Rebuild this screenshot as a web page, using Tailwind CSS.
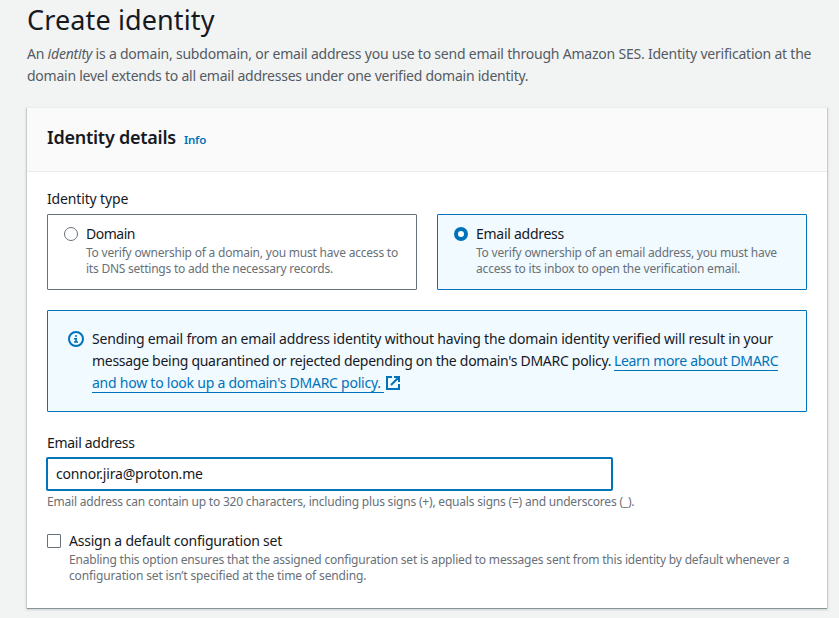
<!DOCTYPE html>
<html lang="en">
<head>
<meta charset="utf-8">
<title>Create identity</title>
<script src="https://cdn.jsdelivr.net/npm/@tailwindcss/browser@4"></script>
</head>
<body class="h-[618px] overflow-hidden bg-[#f2f3f3] font-['Noto_Sans',sans-serif] text-[14px] leading-[22px] text-[#16191f]">
<main class="ml-[27px] w-[800px] whitespace-nowrap pt-[2px]">
  <h1 class="h-[41px] text-[27px] leading-[36px] tracking-[0.12px]">Create identity</h1>
  <p class="text-[#545b64]">
    <span class="block tracking-[-0.214px]">An <em>identity</em> is a domain, subdomain, or email address you use to send email through Amazon SES. Identity verification at the</span>
    <span class="block tracking-[-0.24px]">domain level extends to all email addresses under one verified domain identity.</span>
  </p>

  <section class="mt-[21px] h-[500px] bg-white shadow-[0_1px_0_0_#879596,1px_0_0_0_#c8cdce,-1px_0_0_0_#c8cdce,0_-1px_0_0_#eaeded,0_1px_2px_1px_rgba(0,28,36,0.15)]">
    <header class="flex h-[64px] items-baseline gap-2 border-b border-[#eaeded] bg-[#fafafa] px-5 pt-[18px]">
      <h2 class="text-[18px] leading-[22px] font-semibold tracking-[-0.25px]">Identity details</h2>
      <a class="text-[11.5px] leading-[16px] font-semibold tracking-[-0.2px] text-[#0073bb]">Info</a>
    </header>

    <div class="px-5 pt-4">
      <div class="h-[26px] tracking-[-0.15px]">Identity type</div>
      <div class="grid grid-cols-2 gap-5">
        <label class="flex h-[76px] gap-2 rounded-[1px] border border-[#687078] pt-2 pl-4">
          <svg class="mt-1 size-[14px] shrink-0" viewBox="0 0 14 14"><circle cx="7" cy="7" r="6.5" fill="#fff" stroke="#687078"/></svg>
          <span>
            <span class="block tracking-[-0.48px]">Domain</span>
            <span class="block text-[12px] leading-4 text-[#687078]">
              <span class="block tracking-[-0.21px]">To verify ownership of a domain, you must have access to</span>
              <span class="block tracking-[-0.23px]">its DNS settings to add the necessary records.</span>
            </span>
          </span>
        </label>
        <label class="flex h-[76px] gap-2 rounded-[1px] border border-[#0073bb] bg-[#f1faff] pt-2 pl-4">
          <svg class="mt-1 size-[14px] shrink-0" viewBox="0 0 14 14"><circle cx="7" cy="7" r="5" fill="#fff" stroke="#0073bb" stroke-width="4"/></svg>
          <span>
            <span class="block tracking-[-0.27px]">Email address</span>
            <span class="block text-[12px] leading-4 text-[#687078]">
              <span class="block tracking-[-0.21px]">To verify ownership of an email address, you must have</span>
              <span class="block tracking-[-0.18px]">access to its inbox to open the verification email.</span>
            </span>
          </span>
        </label>
      </div>

      <div class="mt-5 flex h-[102px] gap-2 rounded-[1px] border border-[#0073bb] bg-[#f1faff] pt-[17px] pl-5">
        <svg class="mt-[3px] size-4 shrink-0" viewBox="0 0 16 16" fill="none" stroke="#0073bb" stroke-width="2"><circle cx="8" cy="8" r="7"/><path d="M7 5h2M6 7.75h3M8 7v4M6 11h4" stroke-width="1.6"/></svg>
        <p>
          <span class="block tracking-[-0.19px]">Sending email from an email address identity without having the domain identity verified will result in your</span>
          <span class="flex gap-1"><span class="w-[518px] tracking-[-0.285px]">message being quarantined or rejected depending on the domain's DMARC policy.</span><a class="h-[21px] w-[164px] border-b border-[#0073bb] tracking-[-0.33px] text-[#0073bb]">Learn more about DMARC</a></span>
          <span class="flex items-start"><a class="h-[21px] w-[292px] border-b border-[#0073bb] tracking-[-0.24px] text-[#0073bb]">and how to look up a domain's DMARC policy.</a><svg class="mt-1 ml-[2px] size-[14px]" viewBox="0 0 14 14" fill="none" stroke="#0073bb" stroke-width="2"><path d="M6 1H1v12h12V8M8 1h5v5M13 1 5 9"/></svg></span>
        </p>
      </div>

      <div class="mt-5 tracking-[-0.3px]">Email address</div>
      <div class="-ml-px mt-[3px] h-[34px] w-[567px] rounded-[2px] border-2 border-[#0073bb] bg-white pl-2 leading-[30px] tracking-[-0.2px]">connor.jira@proton.me</div>
      <div class="mt-[3px] text-[12px] leading-4 tracking-[-0.2px] text-[#687078]">Email address can contain up to 320 characters, including plus signs (+), equals signs (=) and underscores (_).</div>

      <label class="mt-5 flex gap-2">
        <span class="mt-1 size-[14px] shrink-0 rounded-[1px] border border-[#687078] bg-white"></span>
        <span>
          <span class="block tracking-[-0.22px]">Assign a default configuration set</span>
          <span class="block text-[12px] leading-4 text-[#687078]">
            <span class="block tracking-[-0.195px]">Enabling this option ensures that the assigned configuration set is applied to messages sent from this identity by default whenever a</span>
            <span class="block tracking-[-0.14px]">configuration set isn’t specified at the time of sending.</span>
          </span>
        </span>
      </label>
    </div>
  </section>
</main>
</body>
</html>
